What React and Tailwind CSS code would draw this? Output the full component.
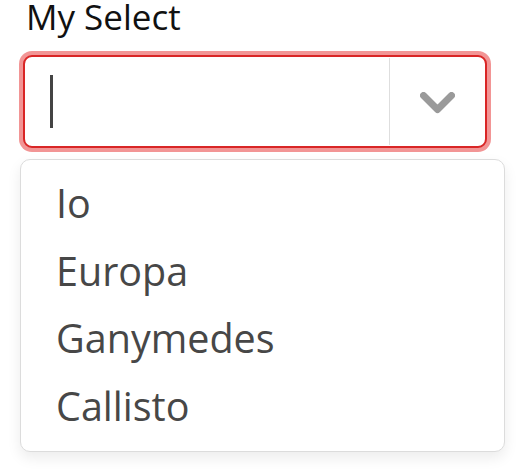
const moons = ['Io', 'Europa', 'Ganymedes', 'Callisto'];

function Chevron() {
  return (
    <svg width="35" height="22" viewBox="0 0 35 22" fill="none">
      <path
        d="M3.5 3.5 L17.5 17.5 L31.5 3.5"
        stroke="#9a9a9a"
        strokeWidth="7"
        strokeLinecap="round"
        strokeLinejoin="round"
      />
    </svg>
  );
}

export default function App() {
  return (
    <div className="min-h-[472px] w-[529px] bg-white font-['Open_Sans',sans-serif]">
      <div className="pl-[23px] pr-[42px]">
        <label className="block pl-[3px] pt-[4px] text-[35px] leading-[26px] text-[#111]">My Select</label>

        {/* control */}
        <div className="mt-[25px] flex h-[93px] w-[464px] items-stretch rounded-[9px] border-2 border-[#d92626] bg-white shadow-[0_0_0_4px_#f29595]">
          <div className="flex flex-1 items-center pl-[25px]">
            <div className="h-[53px] w-[3px] bg-[#444]" />
          </div>
          <div className="my-[1px] w-px bg-[#dedede]" />
          <div className="flex w-[95px] items-center justify-center pt-[2px]">
            <Chevron />
          </div>
        </div>
      </div>

      {/* menu */}
      <div className="ml-[20px] mt-[11px] w-[485px] rounded-[10px] border border-[#dcdcdc] bg-white pb-[11px] pt-[10px] shadow-[0_6px_14px_rgba(0,0,0,0.08)]">
        {moons.map((moon) => (
          <div key={moon} className="h-[67.5px] pl-[35px] text-[39.5px] leading-[67.5px] text-[#474747]">
            {moon}
          </div>
        ))}
      </div>
    </div>
  );
}
